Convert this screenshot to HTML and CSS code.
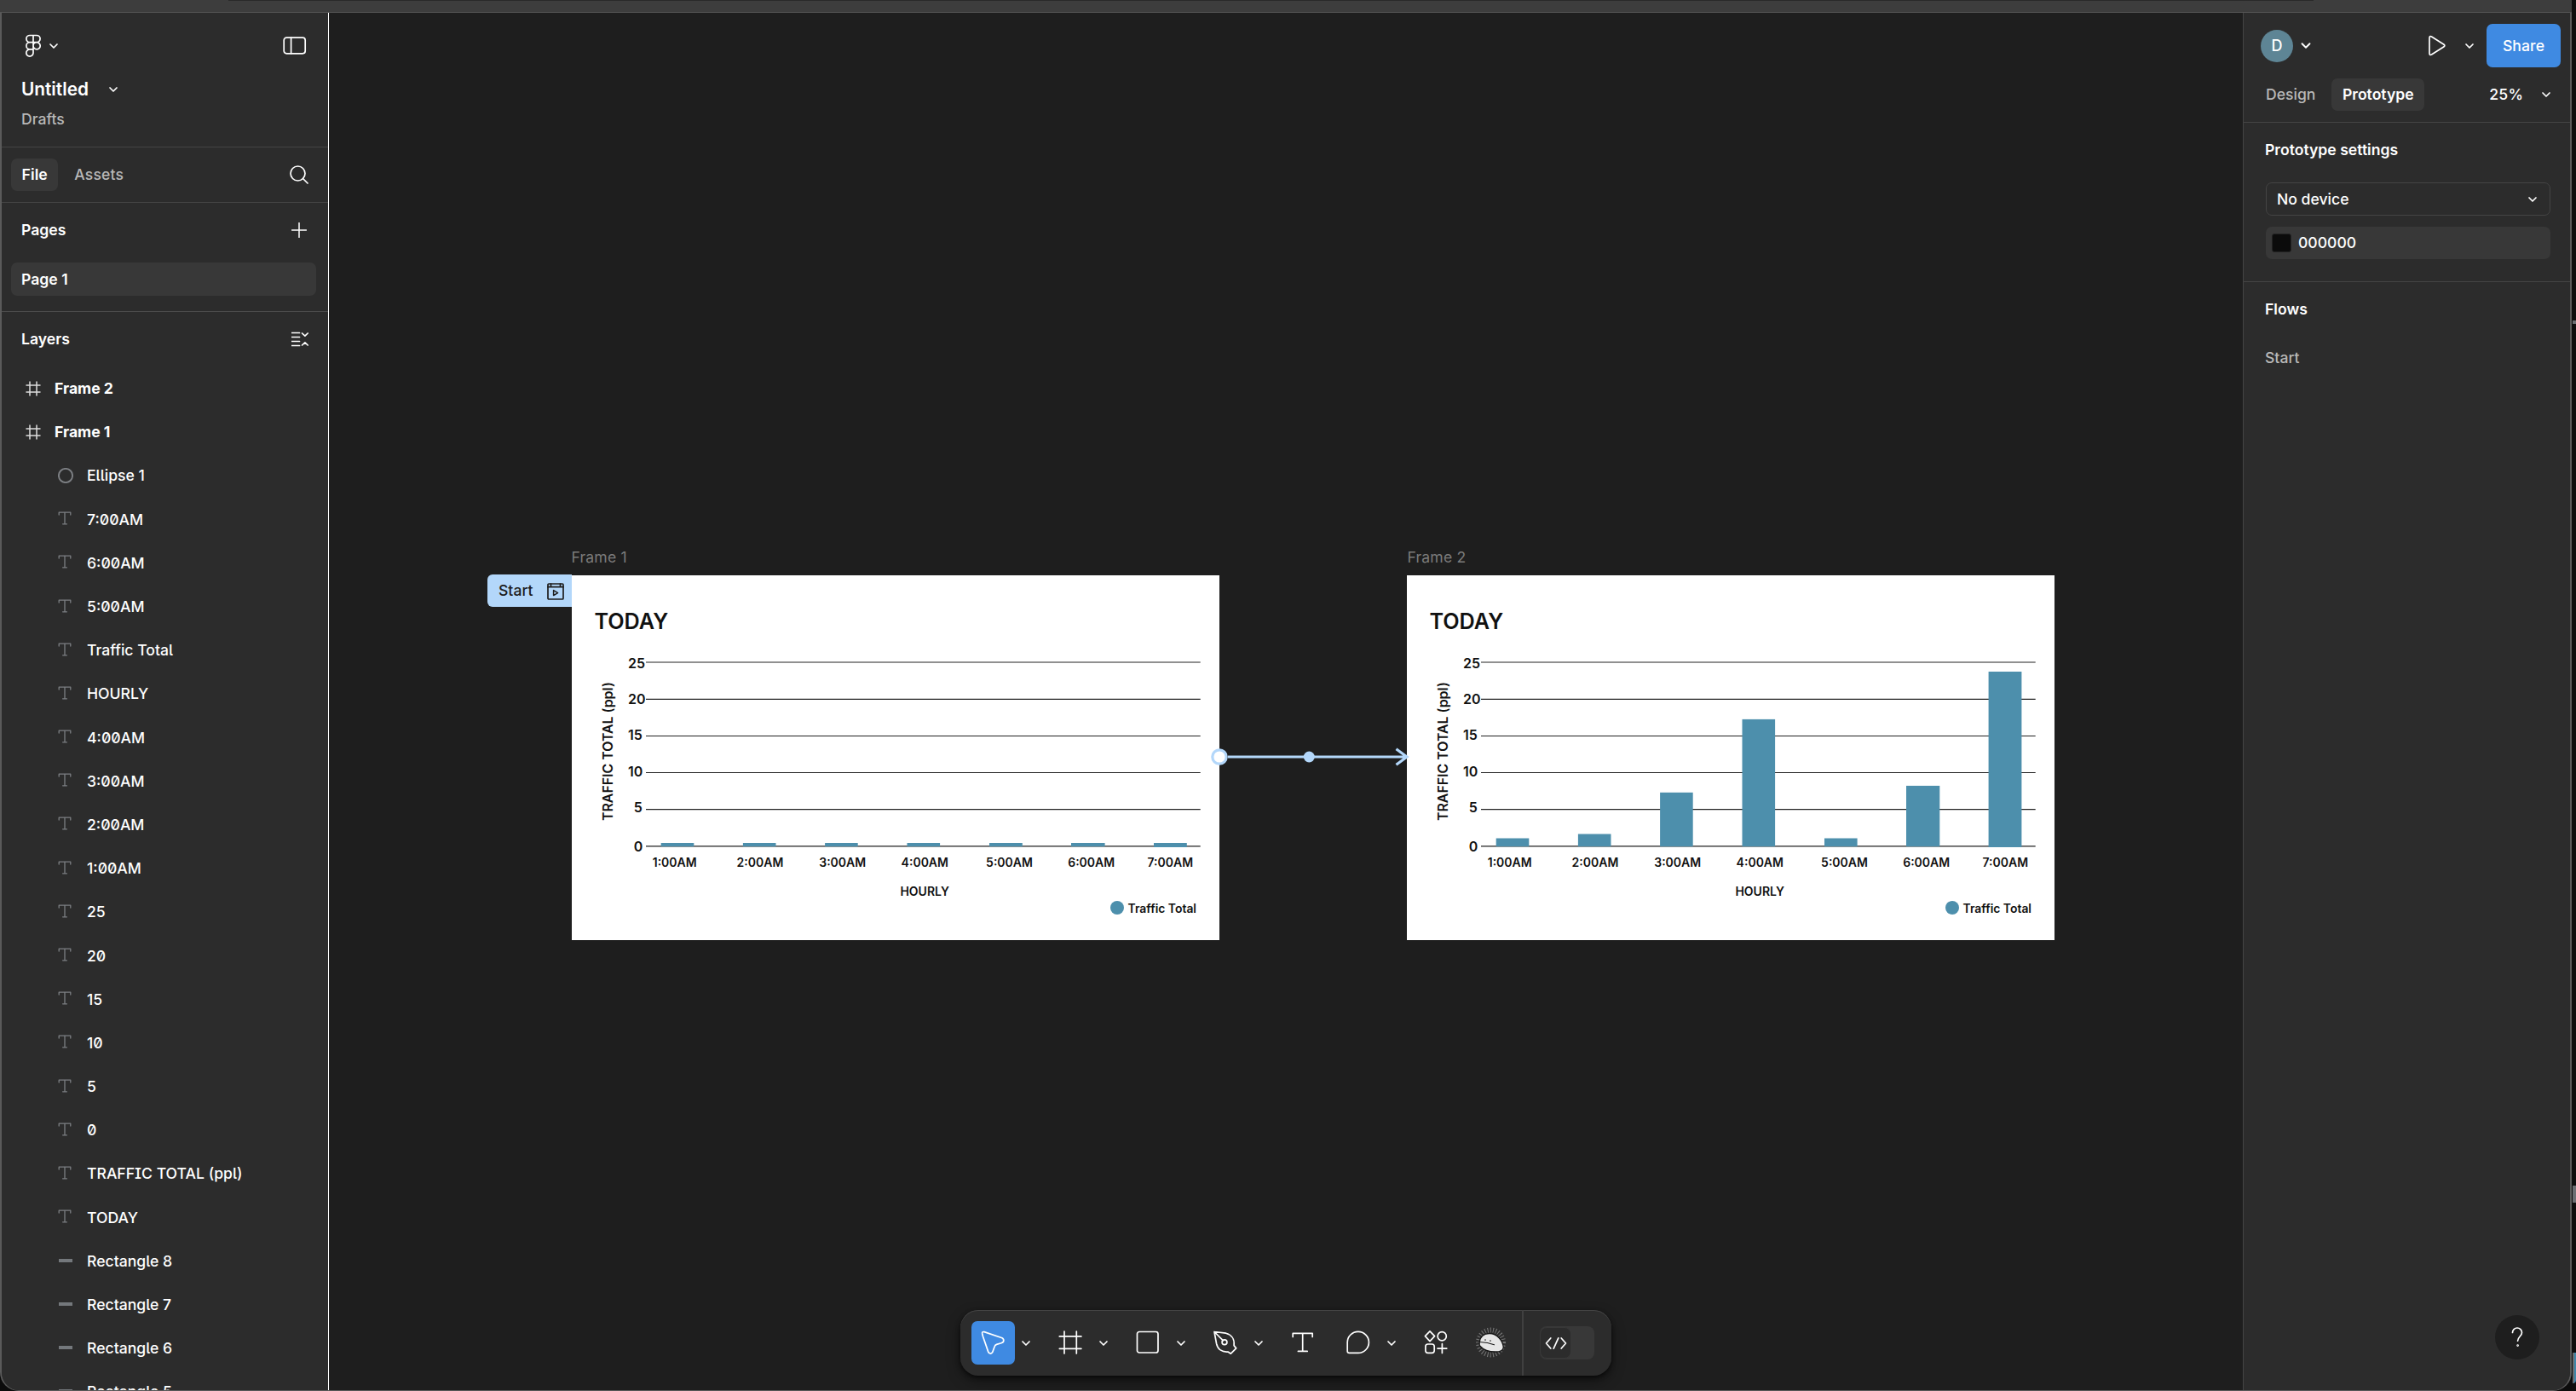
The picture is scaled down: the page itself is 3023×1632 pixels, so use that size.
FILE: index.html
```html
<!DOCTYPE html>
<html lang="en">
<head>
<meta charset="utf-8">
<title>Untitled</title>
<link rel="stylesheet" href="styles.css">
</head>
<body>
<svg width="0" height="0" class="defs">
  <defs>
    <symbol id="chev" viewBox="0 0 12 8"><path d="M2 2l4 4 4-4"/></symbol>
    <symbol id="hash" viewBox="0 0 18 18"><path d="M5 1v16M13 1v16M1 5h16M1 13h16"/></symbol>
    <symbol id="tee" viewBox="0 0 16 16"><path d="M1.2 4V1.2h13.6V4M8 1.2v13.6M5.6 14.8h4.8"/></symbol>
  </defs>
</svg>
<div class="titlebar"><div class="tabline"></div></div>
<div class="window">
  <aside class="left">
    <header class="lhead">
      <div class="row brand">
        <svg class="ic" width="20" height="28" viewBox="0 0 20 28"><path d="M10 1.500H6a4.100 4.100 0 0 0 0 8.200h4zM10 1.500h4a4.100 4.100 0 0 1 0 8.200h-4M10 9.700H6a4.100 4.100 0 0 0 0 8.200h4zM14 9.700a4.100 4.100 0 1 1-4 4.100 4.100 4.100 0 0 1 4-4.100zM10 17.900H6a4.100 4.100 0 1 0 4 4.100z"/></svg>
        <svg class="chev" width="12" height="8"><use href="#chev"/></svg>
        <svg class="ic push" width="28" height="22" viewBox="0 0 28 22"><rect x="1.200" y="1.200" width="25" height="18.600" rx="3"/><path d="M9.600 1.200v18.600"/></svg>
      </div>
      <div class="row title"><span>Untitled</span><svg class="chev" width="12" height="8"><use href="#chev"/></svg></div>
      <div class="muted drafts">Drafts</div>
    </header>
    <div class="row tabs">
      <span class="pill">File</span><span class="muted">Assets</span>
      <svg class="ic push" width="22" height="22" viewBox="0 0 22 22"><circle cx="9.500" cy="9.500" r="8.500"/><path d="M15.500 15.500l5.500 5.500"/></svg>
    </div>
    <section class="pages">
      <div class="row sec"><span>Pages</span><svg class="ic push plus" width="18" height="18" viewBox="0 0 18 18"><path d="M9 .5v17M.5 9h17"/></svg></div>
      <div class="page">Page 1</div>
    </section>
    <section class="layers">
      <div class="row sec lsec"><span>Layers</span><svg class="ic push" width="20" height="18" viewBox="0 0 20 18"><path d="M.5 1.500h9M.5 6.500h9M.5 11.500h9M.5 16.500h9M12.500 2l3.400 3.200L19.200 2M12.500 16l3.400-3.200 3.300 3.200"/></svg></div>
      <ul>
        <li class="frame"><svg><use href="#hash"/></svg>Frame 2</li>
        <li class="frame"><svg><use href="#hash"/></svg>Frame 1</li>
        <li><svg viewBox="0 0 16 16"><circle cx="8" cy="8" r="7.200"/></svg>Ellipse 1</li>
        <li><svg class="t"><use href="#tee"/></svg>7:00AM</li>
        <li><svg class="t"><use href="#tee"/></svg>6:00AM</li>
        <li><svg class="t"><use href="#tee"/></svg>5:00AM</li>
        <li><svg class="t"><use href="#tee"/></svg>Traffic Total</li>
        <li><svg class="t"><use href="#tee"/></svg>HOURLY</li>
        <li><svg class="t"><use href="#tee"/></svg>4:00AM</li>
        <li><svg class="t"><use href="#tee"/></svg>3:00AM</li>
        <li><svg class="t"><use href="#tee"/></svg>2:00AM</li>
        <li><svg class="t"><use href="#tee"/></svg>1:00AM</li>
        <li><svg class="t"><use href="#tee"/></svg>25</li>
        <li><svg class="t"><use href="#tee"/></svg>20</li>
        <li><svg class="t"><use href="#tee"/></svg>15</li>
        <li><svg class="t"><use href="#tee"/></svg>10</li>
        <li><svg class="t"><use href="#tee"/></svg>5</li>
        <li><svg class="t"><use href="#tee"/></svg>0</li>
        <li><svg class="t"><use href="#tee"/></svg>TRAFFIC TOTAL (ppl)</li>
        <li><svg class="t"><use href="#tee"/></svg>TODAY</li>
        <li><i class="bar"></i>Rectangle 8</li>
        <li><i class="bar"></i>Rectangle 7</li>
        <li><i class="bar"></i>Rectangle 6</li>
        <li><i class="bar"></i>Rectangle 5</li>
      </ul>
    </section>
  </aside>

  <main class="canvas">
    <div class="fname f1name">Frame 1</div>
    <div class="fname f2name">Frame 2</div>
    <div class="start"><span>Start</span>
      <svg width="20" height="20" viewBox="0 0 20 20"><rect x="1" y="1" width="18" height="18" rx="1"/><path d="M1 4.700h18M4.500 1v3.700M15.500 1v3.700"/><path class="tri" d="M7.600 8.600v6l5-3z"/></svg>
    </div>
    <svg class="artboard f1" viewBox="0 0 760 428">
      <text class="today" x="26.400" y="63.200">TODAY</text>
      <path class="grid" d="M87 102h650.700M87 145.400h650.700M87 188.500h650.700M87 231.500h650.700M87 274.600h650.700M87 317.800h650.700"/>
      <g class="bars"><rect x="104.700" y="314" width="38.600" height="4.200"/><rect x="200.900" y="314" width="38.600" height="4.200"/><rect x="297.100" y="314" width="38.600" height="4.200"/><rect x="393.500" y="314" width="38.600" height="4.200"/><rect x="490" y="314" width="38.800" height="4.200"/><rect x="586" y="314" width="39.600" height="4.200"/><rect x="683" y="314" width="38.800" height="5"/></g>
      <g class="ylab"><text x="66" y="109.300">25</text><text x="66" y="151">20</text><text x="66" y="192.800">15</text><text x="66" y="236">10</text><text x="72.800" y="278.400">5</text><text x="72.800" y="324">0</text></g>
      <text class="axis" transform="translate(48 288) rotate(-90)">TRAFFIC TOTAL (ppl)</text>
      <g class="xlab"><text x="120.700" y="341.600">1:00AM</text><text x="221" y="341.600">2:00AM</text><text x="317.700" y="341.600">3:00AM</text><text x="414.300" y="341.600">4:00AM</text><text x="513.500" y="341.600">5:00AM</text><text x="609.700" y="341.600">6:00AM</text><text x="702.300" y="341.600">7:00AM</text><text x="414.200" y="376">HOURLY</text></g>
      <circle cx="640" cy="390" r="8"/><text class="leg" x="652.600" y="395.600">Traffic Total</text>
    </svg>
    <svg class="artboard f2" viewBox="0 0 760 428">
      <text class="today" x="26.400" y="63.200">TODAY</text>
      <path class="grid" d="M87 102h650.700M87 145.400h650.700M87 188.500h650.700M87 231.500h650.700M87 274.600h650.700M87 317.800h650.700"/>
      <g class="bars"><rect x="104.700" y="308.500" width="38.600" height="9.700"/><rect x="200.900" y="303.500" width="38.600" height="14.700"/><rect x="297.100" y="254.800" width="38.600" height="63.400"/><rect x="393.500" y="168.900" width="38.600" height="149.300"/><rect x="490" y="308.500" width="38.600" height="9.700"/><rect x="586" y="246.900" width="39.300" height="71.300"/><rect x="682.600" y="113" width="38.800" height="206"/></g>
      <g class="ylab"><text x="66" y="109.300">25</text><text x="66" y="151">20</text><text x="66" y="192.800">15</text><text x="66" y="236">10</text><text x="72.800" y="278.400">5</text><text x="72.800" y="324">0</text></g>
      <text class="axis" transform="translate(48 288) rotate(-90)">TRAFFIC TOTAL (ppl)</text>
      <g class="xlab"><text x="120.700" y="341.600">1:00AM</text><text x="221" y="341.600">2:00AM</text><text x="317.700" y="341.600">3:00AM</text><text x="414.300" y="341.600">4:00AM</text><text x="513.500" y="341.600">5:00AM</text><text x="609.700" y="341.600">6:00AM</text><text x="702.300" y="341.600">7:00AM</text><text x="414.200" y="376">HOURLY</text></g>
      <circle cx="640" cy="390" r="8"/><text class="leg" x="652.600" y="395.600">Traffic Total</text>
    </svg>
    <svg class="wire" width="240" height="24" viewBox="0 0 240 24">
      <path d="M21 12h209M218.500 2.800L231 12l-12.500 9.200"/><circle class="end" cx="11" cy="12" r="8.200"/><circle class="dot" cx="116.300" cy="12" r="6.500"/>
    </svg>

    <nav class="toolbar">
      <div class="tool on"><svg width="30" height="30" viewBox="0 0 30 30"><path d="M2.700 4.700Q2.200 2 5 2.600L26 9.700Q28.500 11 27.600 14 27 15 25 15.800L19.500 17.400Q17.600 18.200 17.200 19.800L14.800 26.400Q13.600 28.600 11.400 27.800 10 27 9.500 25.400L3.500 8z"/></svg></div>
      <svg class="chev tc" width="12" height="8"><use href="#chev"/></svg>
      <div class="tool"><svg width="30" height="30" viewBox="0 0 30 30"><path d="M8 2v26M22.300 2v26M2.300 7.900h25.600M2.300 22.300h25.600"/></svg></div>
      <svg class="chev tc" width="12" height="8"><use href="#chev"/></svg>
      <div class="tool"><svg width="30" height="30" viewBox="0 0 30 30"><rect x="2.500" y="2.500" width="24.500" height="24.500" rx="2.500"/></svg></div>
      <svg class="chev tc" width="12" height="8"><use href="#chev"/></svg>
      <div class="tool"><svg width="30" height="30" viewBox="0 0 30 30"><path d="M2 2.500l10.400 10.400M2 2.500L4.600 16.500C6 23 11 26.600 18 26l3.400 2.200 6.300-6.300-2.600-3.300C26 11 22 5.800 15.600 4.200z"/><circle cx="14" cy="14.700" r="2.900"/></svg></div>
      <svg class="chev tc" width="12" height="8"><use href="#chev"/></svg>
      <div class="tool"><svg width="30" height="30" viewBox="0 0 30 30"><path d="M3.200 8.400V4.400h23v4M14.700 4.400v21M9.400 25.400h10.800"/></svg></div>
      <div class="tool"><svg width="30" height="30" viewBox="0 0 30 30"><path d="M2.200 14.800A12.600 12.500 0 1 1 14.800 27.400H4.400Q2.200 27.400 2.200 25.200z"/></svg></div>
      <svg class="chev tc" width="12" height="8"><use href="#chev"/></svg>
      <div class="tool"><svg width="30" height="30" viewBox="0 0 30 30"><path d="M8 1.800l5.600 5.900L8 13.600 2.400 7.700zM22.400 16.700v10.800M17 22.100h10.800"/><circle cx="22.200" cy="7.800" r="5.100"/><rect x="2.900" y="17" width="10.300" height="10.300" rx="2.800"/></svg></div>
      <div class="tool"><svg class="plug" width="38" height="38" viewBox="0 0 38 38"><circle class="fur" cx="18.500" cy="19" r="14.500"/><path class="face" d="M5.200 19C6 12 10.500 8.700 17 8.700c9 0 15.500 8 16.300 16-.3 3.500-3.500 5.300-9.300 5.300-7 0-14-2-17.300-6-1.500-1.500-2-3-1.500-5z"/><path class="mouth" d="M5.500 18.500c6 .3 11 1 17 3.200M11.500 16h1M17.500 17h1"/></svg></div>
      <div class="sep"></div>
      <div class="dev"><div class="knob"><svg width="26" height="16" viewBox="0 0 26 16"><path d="M6.800 2L1.500 8l5.300 6M19.200 2l5.300 6-5.300 6M15.800 1.800L10.200 14.200"/></svg></div></div>
    </nav>
  </main>

  <aside class="right">
    <div class="row account">
      <div class="avatar">D</div>
      <svg class="chev ac" width="14" height="9"><use href="#chev"/></svg>
      <svg class="ic play" width="22" height="25" viewBox="0 0 22 25"><path d="M2 3.500Q2 .8 4.500 2L18.700 11Q21 12.500 18.700 14L4.500 23Q2 24.200 2 21.500z"/></svg>
      <svg class="chev pc" width="12" height="8"><use href="#chev"/></svg>
      <button>Share</button>
    </div>
    <div class="row rtabs"><span class="muted">Design</span><span class="pill proto">Prototype</span><span class="zoom">25%</span><svg class="chev" width="12" height="8"><use href="#chev"/></svg></div>
    <section class="settings">
      <div class="head">Prototype settings</div>
      <div class="row select"><span>No device</span><svg class="chev" width="12" height="8"><use href="#chev"/></svg></div>
      <div class="row color"><i></i><span>000000</span></div>
    </section>
    <section class="flows"><div class="head">Flows</div><div class="muted flow">Start</div></section>
    <div class="help"><svg width="16" height="26" viewBox="0 0 16 26"><path d="M2.500 7.500A5.500 5.500 0 0 1 13.500 7.500C13.500 11.500 9 12 8.600 17.200"/><circle cx="8.600" cy="22.600" r=".5"/></svg></div>
  </aside>
</div>
<div class="edge"><i class="e1"></i><i class="e2"></i><i class="e3"></i></div>
</body>
</html>
```
FILE: styles.css
```css
* { box-sizing: border-box; }
body {
  margin: 0; width: 3023px; height: 1632px; overflow: hidden;
  background: #0c0c0c; color: #fff;
  font: 500 17.6px/26px Inter, "Liberation Sans", sans-serif;
  display: grid; grid-template: 15px 1617px / 3018px 5px;
}
.defs { position: absolute; }
svg { display: block; fill: none; stroke: #fff; stroke-width: 1.7; stroke-linecap: round; stroke-linejoin: round; flex: none; }
.titlebar { background: #3d3d3d; border-bottom: 1px solid #555; }
.tabline { height: 1px; margin: 0 303px 0 268px; background: #292929; }
.window {
  grid-row: 2; display: grid; grid-template-columns: 384px 2246px 384px; overflow: hidden;
  border: 2px solid #5a5a5a; border-width: 0 2px 1px 2px; border-radius: 0 0 22px 22px; background: #2c2c2c;
}
.edge { grid-row: 1 / 3; grid-column: 2; display: flex; flex-direction: column; align-items: flex-end; background: #0d0d0d; }
.edge i { width: 4px; background: #6b6e72; }
.e1 { height: 4px; margin-top: 376px; }
.e2 { height: 20px; margin-top: 1011px; }
.e3 { height: 36px; margin-top: 176px; border-right: 2px solid #3f86a8; border-radius: 0 0 4px 0; }
.row { display: flex; align-items: center; }
.push { margin-left: auto; }
.muted { color: #b8b8b8; }

.left { border-right: 1px solid #fff; height: 1616px; overflow: hidden; background: #2c2c2c; }
.lhead { height: 158px; border-bottom: 1px solid #444; padding-left: 23px; }
.brand { height: 77px; padding: 0 25px 0 4px; }
.brand .chev { margin-left: 8px; }
.title { font-weight: 600; font-size: 20.800px; height: 26px; }
.title .chev { margin-left: 23px; }
.drafts { margin-top: 9px; }
.tabs { height: 65px; border-bottom: 1px solid #444; padding: 0 23px 0 11px; gap: 19px; letter-spacing: .1px; }
.pill { background: #383838; border-radius: 7px; height: 38px; padding: 6px 12.500px; font-weight: 600; }
.pages { height: 128px; border-bottom: 1px solid #4c4c4c; }
.sec { font-weight: 600; height: 64px; padding: 0 25px 0 23px; }
.plus { stroke-width: 1.500; }
.page { margin: 6px 14px 0 11px; height: 39px; background: #383838; border-radius: 7px; padding: 6.500px 12px; font-weight: 600; }
.lsec { padding-right: 23px; }
ul { list-style: none; margin: 0; padding: .5px 0 0; font-feature-settings: "zero", "ss02"; }
li { height: 51.200px; padding-left: 66px; display: flex; align-items: center; }
li svg { width: 18px; height: 18px; stroke: #7c7f83; margin: -1px 16px 0 0; }
li svg.t { width: 16px; height: 16px; margin: -3px 18px 0 0; stroke-width: 1.300; }
.frame { padding-left: 28px; font-weight: 700; }
.frame svg { stroke: #ddd; stroke-width: 1.500; }
.bar { width: 16px; height: 4px; background: #74787c; margin: -2px 17px 0 1px; }

.canvas { position: relative; background: #1e1e1e; height: 1616px; overflow: hidden; }
.fname { position: absolute; top: 626px; color: #7b7b7b; font-weight: 400; letter-spacing: .15px; }
.f1name { left: 284.500px; }
.f2name { left: 1265.500px; }
.start { position: absolute; left: 186px; top: 659px; width: 99px; height: 38px; display: flex; align-items: center; justify-content: space-between; padding: 0 9px 0 13px; background: #b3d7fa; color: #1e1e1e; border-radius: 6px 0 0 6px; }
.start svg { stroke: #1e1e1e; margin-top: 1px; }
.start .tri { stroke-width: 1.500; }
.artboard { position: absolute; top: 660px; width: 760px; height: 428px; background: #fff; stroke: none; fill: #111; }
.f1 { left: 285px; }
.f2 { left: 1265px; }
.grid { stroke: #222; stroke-width: 1.150; stroke-linecap: butt; }
.bars, .artboard circle { fill: #4d8fac; }
.today { font-size: 25.200px; font-weight: 600; }
.ylab { font-size: 16px; font-weight: 600; }
.axis { font-size: 15.900px; font-weight: 600; }
.xlab { font-size: 14px; font-weight: 600; text-anchor: middle; }
.leg { font-size: 13.900px; font-weight: 600; }
.wire { position: absolute; left: 1034px; top: 861px; stroke: #b3d7fa; stroke-width: 3.200; stroke-linecap: butt; stroke-linejoin: miter; }
.end { fill: #fff; }
.dot { fill: #b3d7fa; stroke: none; }

.toolbar { position: absolute; left: 741px; top: 1522px; width: 764px; height: 77px; padding-left: 13px; display: flex; align-items: center; background: #2c2c2c; border-radius: 21px; box-shadow: inset 0 1px 0 #444, 0 2px 5px #0009, 0 6px 16px #0006; }
.tool { width: 51px; height: 51px; margin-right: 14px; display: flex; align-items: center; justify-content: center; border-radius: 7px; }
.tool svg { margin: -1px 0 0 -1px; }
.on { background: #3f8ae2; }
.tool:has(+ .tc) { margin-right: 0; }
.tc { margin: 0 21px 0 7px; }
.tool .plug { margin: -2px 0 0 -2px; }
.fur { stroke: #777; stroke-width: 6; stroke-dasharray: 1 2.200; stroke-linecap: butt; }
.face { fill: #e6e6e6; stroke: #161616; stroke-width: 1.300; }
.mouth { stroke: #161616; stroke-width: 1.100; }
.sep { width: 2px; height: 77px; background: #404040; margin-left: -4px; }
.dev { width: 64px; height: 39px; margin-left: 19px; background: #383838; border-radius: 8px; }
.knob { width: 37px; height: 37px; margin-top: 1px; background: #2c2c2c; border: 1px solid #383838; border-radius: 8px; display: flex; align-items: center; justify-content: center; }

.right { background: #2c2c2c; border-left: 1px solid #444; position: relative; height: 1616px; }
.account { height: 77px; padding-left: 20px; }
.avatar { width: 38px; height: 38px; border-radius: 50%; background: #5e8595; display: flex; align-items: center; justify-content: center; font-size: 18px; }
.ac { margin-left: 8px; }
.play { margin-left: 136px; }
.pc { margin: 0 13px 0 21px; }
button { margin: 0 0 0 1px; width: 87px; height: 51px; border: 0; border-radius: 7px; background: #3f8ae2; color: #fff; font: inherit; padding: 0; letter-spacing: .1px; }
.rtabs { height: 52px; align-items: flex-start; padding: 0 22px 0 26px; border-bottom: 1px solid #444; }
.rtabs > span { line-height: 26px; padding-top: 6px; }
.proto { margin-left: 19px; }
.zoom { margin-left: 76px; letter-spacing: .3px; }
.rtabs .chev { margin: 15px 0 0 auto; }
.settings { height: 187px; border-bottom: 1px solid #444; padding: 0 23px 0 26px; }
.head { font-weight: 600; height: 64px; padding-top: 19px; text-indent: -1px; }
.select { height: 39px; margin-top: 6px; border: 1px solid #444; border-radius: 7px; padding: 0 14px 0 12px; justify-content: space-between; }
.color { height: 38px; margin-top: 13px; background: #383838; border-radius: 7px; padding-left: 7px; gap: 8px; }
.color i { width: 23px; height: 22px; background: #0b0b0b; border: 1px solid #222; border-radius: 3px; }
.flows { padding-left: 26px; }
.flow { margin-top: 12px; text-indent: -1px; }
.help { position: absolute; left: 295px; top: 1528px; width: 52px; height: 52px; border-radius: 50%; background: #1e1e1e; display: flex; align-items: center; justify-content: center; }
```
